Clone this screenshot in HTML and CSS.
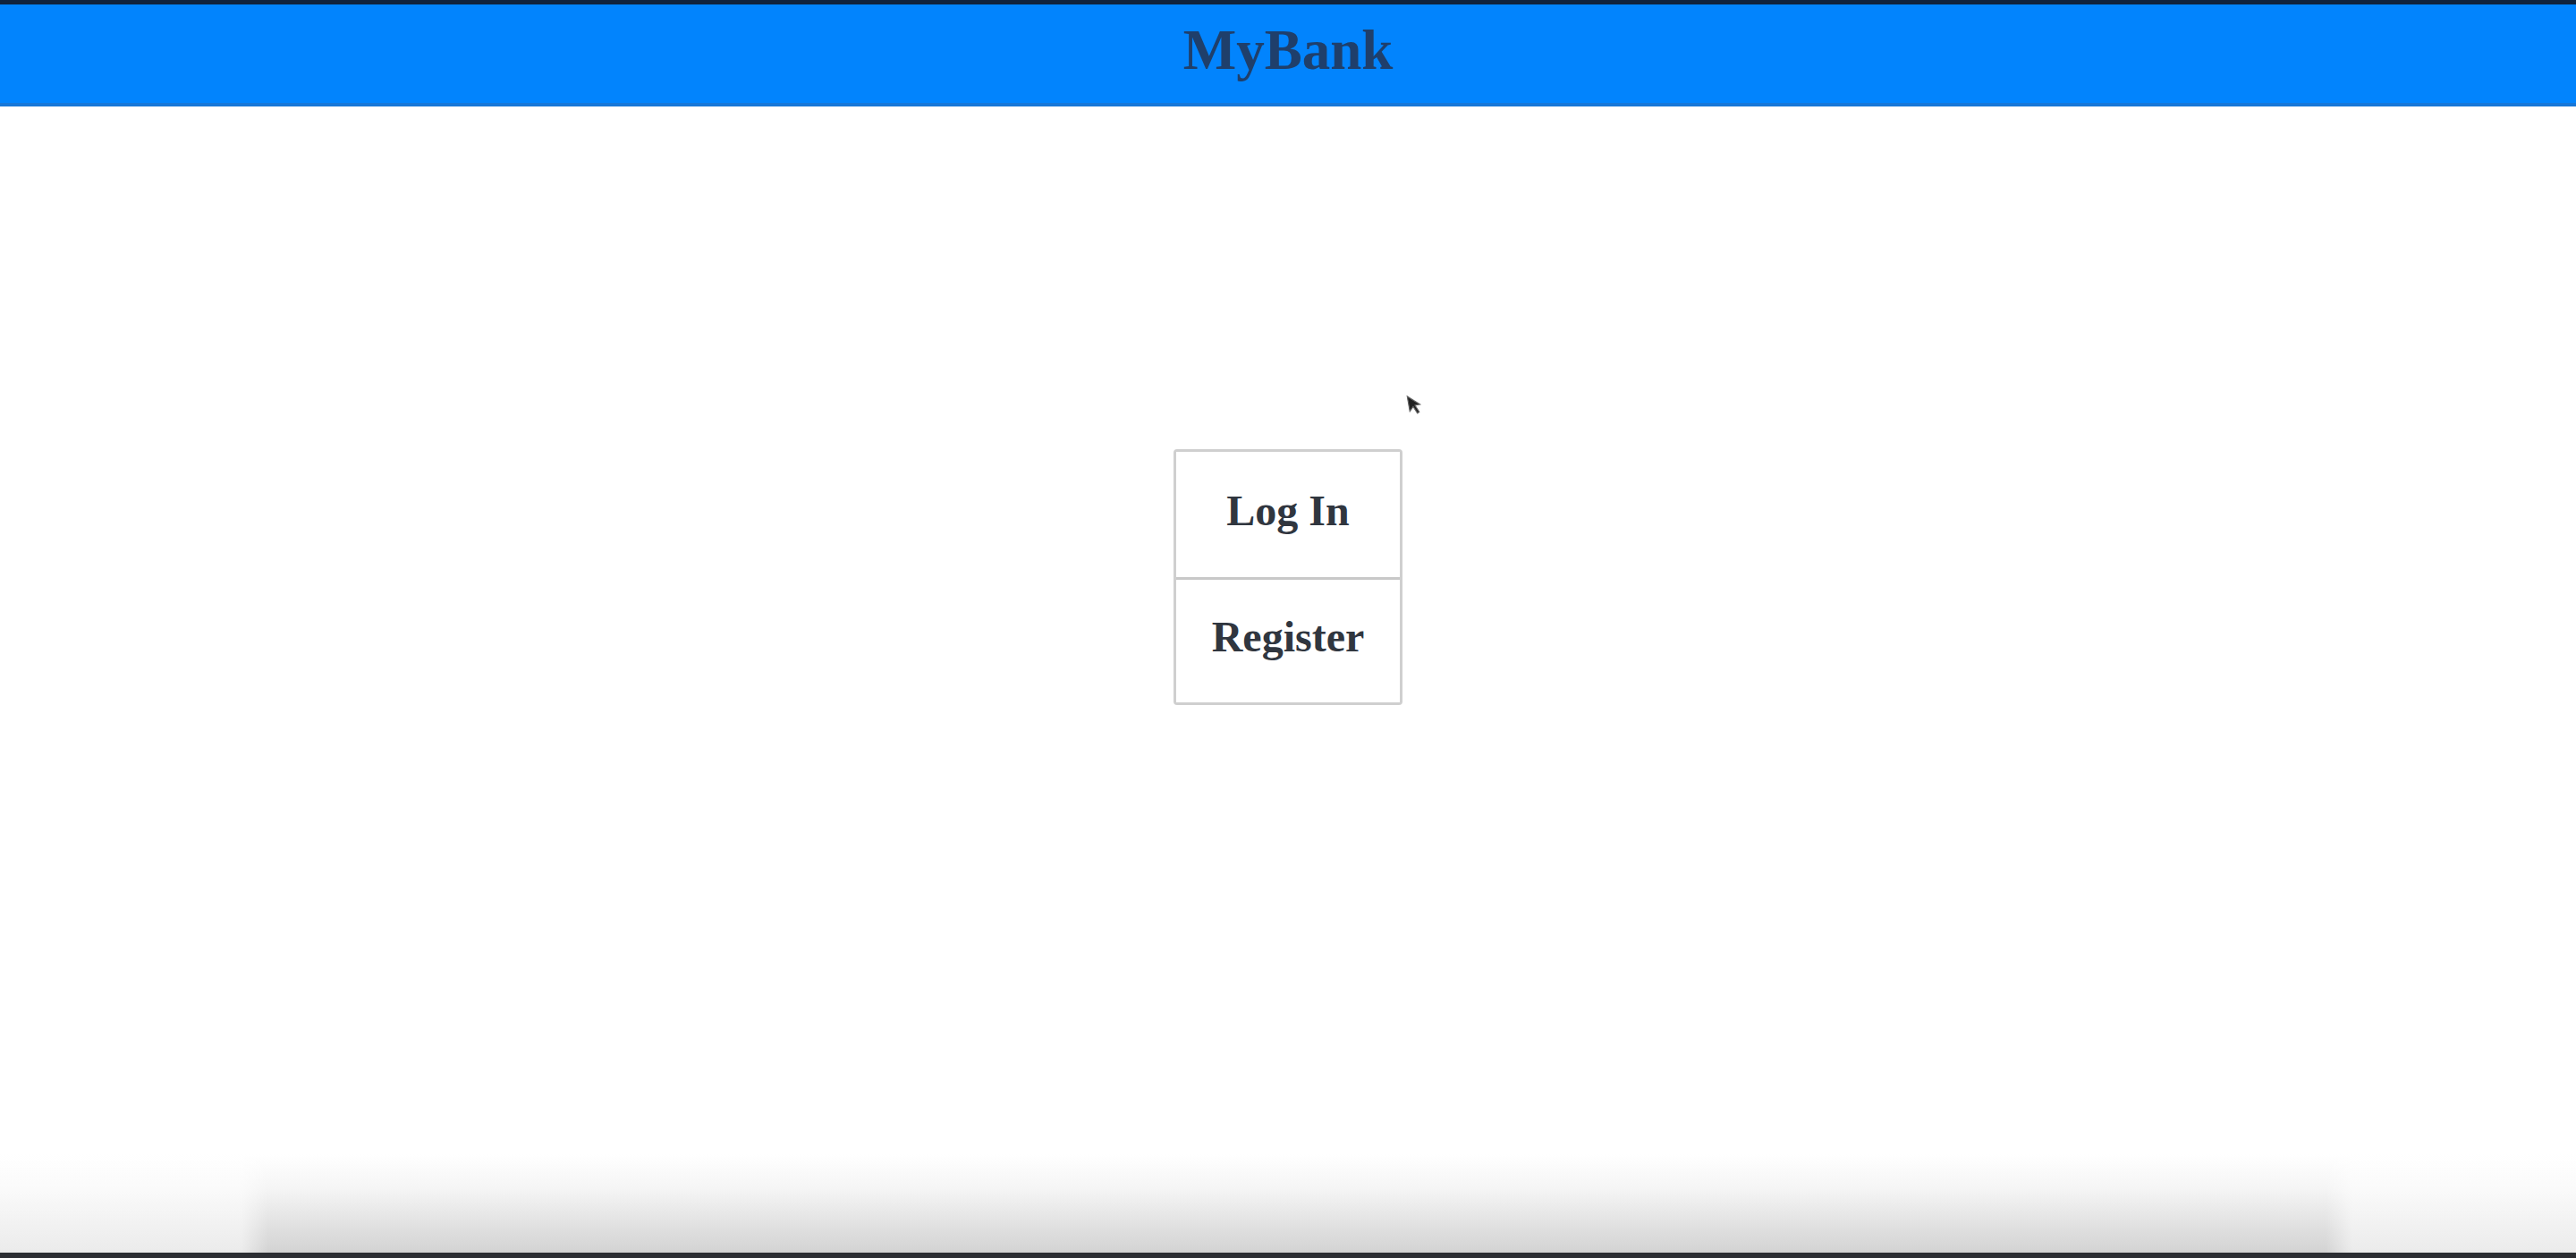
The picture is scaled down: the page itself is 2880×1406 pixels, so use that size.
FILE: index.html
```html
<!DOCTYPE html>
<html lang="en">
<head>
<meta charset="utf-8">
<title>MyBank</title>
<link rel="stylesheet" href="styles.css">
</head>
<body>
<div class="page">
  <header class="topbar">
    <h1 class="brand">MyBank</h1>
  </header>
  <main class="content">
    <div class="menu">
      <button class="menu-btn" type="button">Log In</button>
      <button class="menu-btn" type="button">Register</button>
    </div>
  </main>
  <div class="shade"></div>
</div>
<svg class="cursor" width="16" height="26" viewBox="0 0 14 22">
  <path d="M1 1 L1 16 L5 12 L8 19 L10 18 L7 11 L12 11 Z" fill="#222" stroke="#666" stroke-width="1"/>
</svg>
</body>
</html>
```
FILE: styles.css
```css
html, body {
  margin: 0;
  padding: 0;
  height: 100%;
  background: #ffffff;
}
.page {
  display: flex;
  flex-direction: column;
  min-height: 100vh;
  font-family: "Liberation Serif", "Times New Roman", serif;
}
.topbar {
  height: 110px;
  border-top: 5px solid #10233d;
  border-bottom: 4px solid #1777d8;
  background: #0284fd;
  display: flex;
  align-items: center;
  justify-content: center;
}
.brand {
  margin: 0;
  font-size: 63px;
  font-weight: bold;
  color: #1f3f6b;
  line-height: 1;
  transform: translateY(-4px);
}
.content {
  flex: 1;
  display: flex;
  justify-content: center;
  align-items: flex-start;
  padding-top: 383px;
}
.menu {
  display: flex;
  flex-direction: column;
  width: 256px;
  border: 3px solid #cfcfcf;
  border-radius: 4px;
  box-sizing: border-box;
}
.menu-btn {
  height: 140px;
  background: #ffffff;
  border: none;
  font-family: "Liberation Serif", "Times New Roman", serif;
  font-size: 48px;
  font-weight: bold;
  color: #30363f;
  padding: 0 0 10px 0;
}
.menu-btn + .menu-btn {
  border-top: 3px solid #c8c8c8;
}
.shade {
  height: 110px;
  border-bottom: 6px solid #2c2e33;
  background:
    linear-gradient(to right, rgba(255,255,255,0.55) 0, rgba(255,255,255,0.55) 270px, rgba(255,255,255,0) 300px, rgba(255,255,255,0) 2600px, rgba(255,255,255,0.55) 2630px, rgba(255,255,255,0.55) 100%),
    linear-gradient(to bottom, #ffffff 0%, #f5f5f5 35%, #e2e2e2 70%, #d3d3d3 100%);
}
.cursor {
  position: absolute;
  left: 1574px;
  top: 440px;
  transform: rotate(-10deg);
}
```
